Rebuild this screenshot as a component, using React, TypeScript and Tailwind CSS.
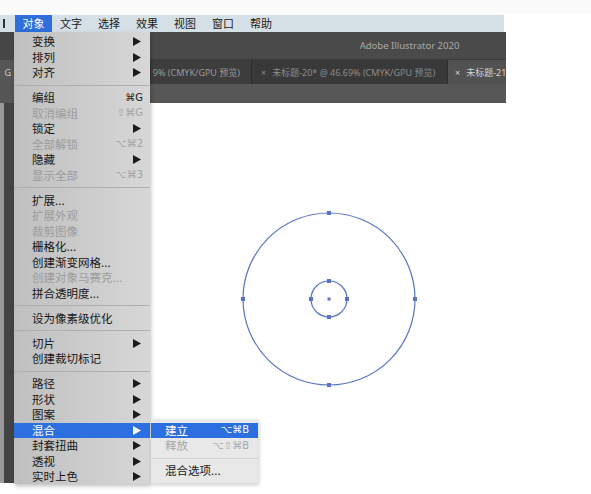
import React from "react";

type Item = { label: string; sc?: string; arrow?: boolean; dis?: boolean; hl?: boolean };

const sections: Item[][] = [
  [
    { label: "变换", arrow: true },
    { label: "排列", arrow: true },
    { label: "对齐", arrow: true },
  ],
  [
    { label: "编组", sc: "⌘G" },
    { label: "取消编组", sc: "⇧⌘G", dis: true },
    { label: "锁定", arrow: true },
    { label: "全部解锁", sc: "⌥⌘2", dis: true },
    { label: "隐藏", arrow: true },
    { label: "显示全部", sc: "⌥⌘3", dis: true },
  ],
  [
    { label: "扩展..." },
    { label: "扩展外观", dis: true },
    { label: "裁剪图像", dis: true },
    { label: "栅格化..." },
    { label: "创建渐变网格..." },
    { label: "创建对象马赛克...", dis: true },
    { label: "拼合透明度..." },
  ],
  [{ label: "设为像素级优化" }],
  [
    { label: "切片", arrow: true },
    { label: "创建裁切标记" },
  ],
  [
    { label: "路径", arrow: true },
    { label: "形状", arrow: true },
    { label: "图案", arrow: true },
    { label: "混合", arrow: true, hl: true },
    { label: "封套扭曲", arrow: true },
    { label: "透视", arrow: true },
    { label: "实时上色", arrow: true },
  ],
];

function Arrow({ white }: { white?: boolean }) {
  return (
    <svg width="8" height="9" viewBox="0 0 8 9">
      <polygon points="0,0 8,4.5 0,9" fill={white ? "#ffffff" : "#1c1c1c"} />
    </svg>
  );
}

function Row({ it }: { it: Item }) {
  const color = it.hl ? "text-white" : it.dis ? "text-[#9c9c9c]" : "text-[#161616]";
  return (
    <div
      className={`h-[15.5px] flex items-center justify-between pl-[18px] pr-[9px] ${
        it.hl ? "bg-[#2c6fe0]" : ""
      }`}
    >
      <span className={`text-[11.5px] leading-none whitespace-nowrap ${color}`}>{it.label}</span>
      {it.arrow && <Arrow white={it.hl} />}
      {it.sc && (
        <span
          className={`font-['DejaVu_Sans',sans-serif] text-[10px] leading-none -mr-[2px] ${
            it.dis ? "text-[#a2a2a2]" : "text-[#1a1a1a]"
          }`}
        >
          {it.sc}
        </span>
      )}
    </div>
  );
}

function Sep() {
  return (
    <div className="h-[9.5px] flex items-center">
      <div className="w-full h-px bg-[#aeaeae]" />
    </div>
  );
}

const menuBar = ["文字", "选择", "效果", "视图", "窗口", "帮助"];

export default function App() {
  return (
    <div className="relative w-[591px] h-[494px] overflow-hidden bg-white font-['Noto_Sans_CJK_SC','Noto_Sans',sans-serif]">
      <div className="h-[15px] bg-[#fbfbfb]" />
      {/* menu bar */}
      <div className="w-[504px] h-[17px] bg-[#d5e0e6] flex items-stretch text-[11px] text-[#1a1a1a]">
        <div className="w-[15px] flex items-center pl-[3px]">
          <div className="w-[1.5px] h-[9px] bg-[#333]" />
        </div>
        <div className="px-[7.5px] bg-[#2f6fdb] text-white flex items-center leading-none">对象</div>
        {menuBar.map((m) => (
          <div key={m} className="px-[8px] flex items-center leading-none">
            {m}
          </div>
        ))}
      </div>
      {/* window */}
      <div className="flex w-[504px]">
        <div className="w-[14px] flex flex-col">
          <div className="h-[28px] bg-[#464646]" />
          <div className="h-[24px] bg-[#565656] flex items-center justify-end pr-[3px]">
            <span className="font-['Noto_Sans',sans-serif] text-[9px] text-[#cfcfcf] leading-none">G</span>
          </div>
          <div className="h-[19px] bg-[#555555]" />
          <div className="h-[380px] flex">
            <div className="w-[4px] bg-[#9a9a9a]" />
            <div className="w-[10px] bg-[#434343]" />
          </div>
        </div>
        <div className="flex-1 flex flex-col">
          <div className="h-[28px] bg-[#4a4a4a] border-b border-[#3c3c3c] flex items-center justify-end pr-[47px]">
            <span className="font-['Noto_Sans',sans-serif] text-[9.5px] text-[#a9a9a9] leading-none">
              Adobe Illustrator 2020
            </span>
          </div>
          <div className="h-[24px] flex bg-[#3e3e3e] font-['Noto_Sans','Noto_Sans_CJK_SC',sans-serif] text-[9px] leading-none">
            <div className="w-[237px] bg-[#3d3d3d] flex items-center justify-end pr-[11px] text-[#9a9a9a] whitespace-nowrap">
              9% (CMYK/GPU 预览)
            </div>
            <div className="w-px bg-[#2c2c2c]" />
            <div className="w-[195px] bg-[#393939] flex items-center pl-[9px] gap-[6px] text-[#8c8c8c] whitespace-nowrap overflow-hidden">
              <span>×</span>
              <span>未标题-20* @ 46.69% (CMYK/GPU 预览)</span>
            </div>
            <div className="flex-1 bg-[#525252] border-l border-[#2c2c2c] flex items-center pl-[7px] gap-[6px] text-[#d4d4d4] whitespace-nowrap overflow-hidden">
              <span>×</span>
              <span>未标题-21</span>
            </div>
          </div>
          <div className="h-[19px] bg-[#575757]" />
        </div>
      </div>

      {/* artwork on canvas */}
      <svg className="absolute left-0 top-0" width="591" height="494" viewBox="0 0 591 494">
        <g stroke="#5873c4" strokeWidth="1.2" fill="none">
          <circle cx="329" cy="299" r="86" />
          <circle cx="329" cy="299" r="18" />
        </g>
        <g fill="#5873c4">
          {[
            [329, 213],
            [329, 385],
            [243, 299],
            [415, 299],
            [329, 281],
            [329, 317],
            [311, 299],
            [347, 299],
          ].map(([x, y], i) => (
            <rect key={i} x={x - 2} y={y - 2} width="4" height="4" />
          ))}
          <rect x={327.5} y={297.5} width="3" height="3" />
        </g>
      </svg>

      {/* dropdown menu */}
      <div className="absolute left-[14px] top-[32px] w-[136px] h-[452px] bg-linear-to-r from-[#bfbfbf] via-[#cbcbcb] to-[#d7d7d7] pt-[2px] shadow-[1px_2px_4px_rgba(0,0,0,0.25)]">
        {sections.map((sec, si) => (
          <React.Fragment key={si}>
            {si > 0 && <Sep />}
            {sec.map((it) => (
              <Row key={it.label} it={it} />
            ))}
          </React.Fragment>
        ))}
      </div>

      {/* submenu */}
      <div className="absolute left-[151px] top-[418.5px] w-[107px] h-[64px] bg-[#e8e8e8] pt-[4px] shadow-[1px_2px_4px_rgba(0,0,0,0.2)]">
        <div className="h-[15.5px] bg-[#2c6fe0] flex items-center justify-between pl-[14px] pr-[9px]">
          <span className="text-[11.5px] leading-none text-white">建立</span>
          <span className="font-['DejaVu_Sans',sans-serif] text-[10px] leading-none text-white">⌥⌘B</span>
        </div>
        <div className="h-[15.5px] flex items-center justify-between pl-[14px] pr-[9px]">
          <span className="text-[11.5px] leading-none text-[#a4a4a4]">释放</span>
          <span className="font-['DejaVu_Sans',sans-serif] text-[10px] leading-none text-[#a8a8a8]">⌥⇧⌘B</span>
        </div>
        <div className="h-[9.5px] flex items-center">
          <div className="w-full h-px bg-[#cfcfcf]" />
        </div>
        <div className="h-[15.5px] flex items-center pl-[14px]">
          <span className="text-[11.5px] leading-none text-[#161616]">混合选项...</span>
        </div>
      </div>
    </div>
  );
}
